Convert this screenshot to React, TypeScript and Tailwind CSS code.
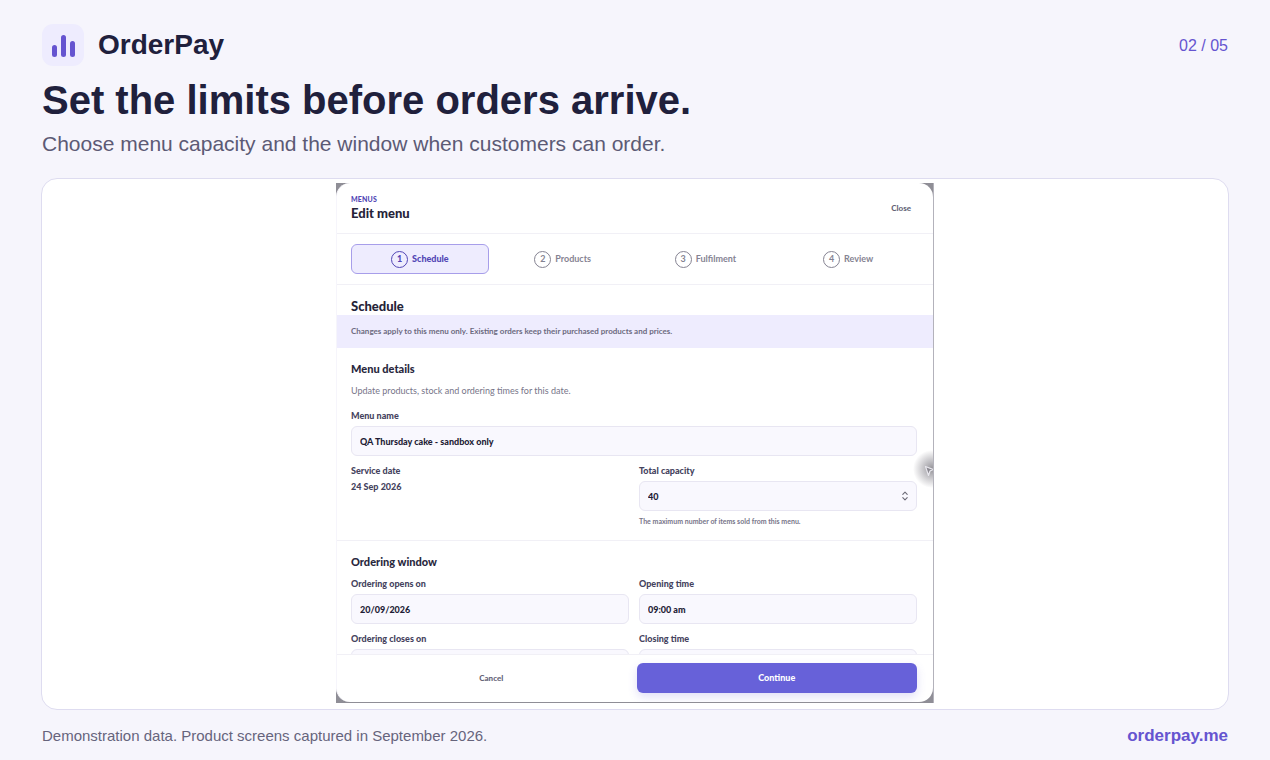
import type { ReactNode } from 'react';

interface FieldProps {
  id: string;
  label: string;
  value: string;
  stepper?: boolean;
  hint?: string;
}

const steps = ['Schedule', 'Products', 'Fulfilment', 'Review'];

function Field({ id, label, value, stepper = false, hint }: FieldProps) {
  return (
    <div className="flex flex-col gap-1">
      <label htmlFor={id} className="text-[9px] leading-3 font-black text-[#45435e]">
        {label}
      </label>
      <div className="relative">
        <input
          id={id}
          type="text"
          defaultValue={value}
          className="block h-[30px] w-full rounded-md border border-[#e8e6f2] bg-[#f9f8fe] px-2 text-[9px] font-black text-[#1f1d36] outline-none"
        />
        {stepper && (
          <svg
            viewBox="0 0 8 12"
            className="absolute top-[9px] right-2 h-3 w-2"
            fill="none"
            stroke="#6b6a76"
            strokeWidth="1.1"
            strokeLinecap="round"
            strokeLinejoin="round"
          >
            <path d="M1.8 4.3 4 2.1 6.2 4.3M1.8 7.7 4 9.9 6.2 7.7" />
          </svg>
        )}
      </div>
      {hint && <p className="text-[7px] leading-3 font-bold text-[#777589]">{hint}</p>}
    </div>
  );
}

function Section({ title, children }: { title: string; children: ReactNode }) {
  return (
    <section className="border-b border-[#f1f0f6] py-[13px] pr-4 pl-[14px]">
      <h3 className="mb-2 text-[11px] leading-4 font-black text-[#29273d]">{title}</h3>
      {children}
    </section>
  );
}

function EditMenuDialog() {
  return (
    <div className="relative flex w-full max-w-[598px] border-r border-[#b3b2bb] bg-[#8f8e96] pb-px font-[Lato,sans-serif]">
      <div className="flex min-h-0 w-full flex-col overflow-hidden rounded-[14px] border-l border-[#f6f5fb] bg-white">
        <header className="flex shrink-0 items-center justify-between border-b border-[#f1f0f6] pt-[11px] pr-[22px] pb-[11px] pl-[14px]">
          <div>
            <p className="text-[7px] leading-[10px] font-black tracking-wide text-[#5246b5]">MENUS</p>
            <h2 className="text-[13px] leading-[18px] font-black text-[#252338]">Edit menu</h2>
          </div>
          <button type="button" className="text-[8px] leading-3 font-black text-[#656377]">
            Close
          </button>
        </header>

        <nav className="grid shrink-0 grid-cols-4 gap-[5px] border-b border-[#f1f0f6] py-[10px] pr-4 pl-[14px]">
          {steps.map((step, idx) => {
            const active = idx === 0;
            return (
              <button
                key={step}
                type="button"
                className={`flex h-[30px] items-center justify-center gap-1 rounded-md border text-[9px] ${
                  active
                    ? 'border-[#a79eea] bg-[#eeecfe] font-black text-[#5246b5]'
                    : 'border-transparent font-bold text-[#858392]'
                }`}
              >
                <span className="flex size-[17px] items-center justify-center rounded-full border border-current">
                  {idx + 1}
                </span>
                {step}
              </button>
            );
          })}
        </nav>

        <div className="min-h-0 flex-1 overflow-hidden">
          <h2 className="pt-3 pr-4 pl-[14px] text-[13px] leading-[18px] font-black text-[#252338]">Schedule</h2>
          <p className="bg-[#eeecfe] py-[10px] pr-4 pl-[14px] text-[8px] leading-[13px] font-bold text-[#6c6a80]">
            Changes apply to this menu only. Existing orders keep their purchased products and prices.
          </p>

          <Section title="Menu details">
            <p className="mb-[13px] text-[9px] leading-3 text-[#777589]">
              Update products, stock and ordering times for this date.
            </p>
            <Field id="menu-name" label="Menu name" value="QA Thursday cake - sandbox only" />
            <div className="mt-[9px] grid grid-cols-2 gap-[10px]">
              <div className="flex flex-col gap-1 text-[9px] leading-3 font-black text-[#45435e]">
                <p>Service date</p>
                <p>24 Sep 2026</p>
              </div>
              <Field
                id="capacity"
                label="Total capacity"
                value="40"
                stepper
                hint="The maximum number of items sold from this menu."
              />
            </div>
          </Section>

          <Section title="Ordering window">
            <div className="grid grid-cols-2 gap-x-[10px] gap-y-[9px]">
              <Field id="opens-on" label="Ordering opens on" value="20/09/2026" />
              <Field id="opens-at" label="Opening time" value="09:00 am" />
              <Field id="closes-on" label="Ordering closes on" value="" />
              <Field id="closes-at" label="Closing time" value="" />
            </div>
          </Section>
        </div>

        <footer className="grid shrink-0 grid-cols-2 gap-[5px] border-t border-[#f1f0f6] pt-2 pr-4 pb-[9px] pl-[14px]">
          <button type="button" className="h-[30px] text-[8px] font-black text-[#656377]">
            Cancel
          </button>
          <button
            type="button"
            className="h-[30px] rounded-md bg-[#6761d9] text-[9px] font-black text-white shadow-[0_4px_10px_rgba(103,97,217,0.2)]"
          >
            Continue
          </button>
        </footer>
      </div>

      {/* Pointer resting on the dialog edge */}
      <div className="absolute inset-y-0 right-0 w-6 overflow-hidden">
        <svg viewBox="0 0 24 48" className="absolute top-[264px] right-0 h-12 w-6">
          <defs>
            <radialGradient id="pointer-shade">
              <stop offset="0" stopColor="#77757c" stopOpacity="0.8" />
              <stop offset="0.5" stopColor="#8a8890" stopOpacity="0.45" />
              <stop offset="1" stopColor="#8a8890" stopOpacity="0" />
            </radialGradient>
          </defs>
          <circle cx="23" cy="22" r="19" fill="url(#pointer-shade)" />
          <path
            d="M16.5 19.5 24 22.5 21 24 19.5 28.5Z"
            fill="#8a8890"
            stroke="#e9e8ee"
            strokeWidth="1.2"
            strokeLinejoin="round"
          />
        </svg>
      </div>
    </div>
  );
}

export default function App() {
  return (
    <main className="flex h-screen flex-col bg-[#f6f5fc] px-[41px] pt-6 pb-[13px] font-['Liberation_Sans',Arial,sans-serif] text-[#20203c]">
      <header className="flex items-center justify-between px-px">
        <div className="flex items-center gap-[14px]">
          <svg viewBox="0 0 42 42" className="size-[42px]">
            <rect width="42" height="42" rx="11" fill="#eeecfe" />
            <g fill="#6554d0">
              <rect x="10" y="21" width="5" height="12" rx="2.5" />
              <rect x="19" y="11" width="5" height="22" rx="2.5" />
              <rect x="28" y="17" width="5" height="16" rx="2.5" />
            </g>
          </svg>
          <span className="text-[28px] leading-[42px] font-bold">OrderPay</span>
        </div>
        <span className="pt-0.5 text-[16px] text-[#6554d0]">02 / 05</span>
      </header>

      <h1 className="mt-[10px] px-px text-[40px] leading-[48px] font-bold">Set the limits before orders arrive.</h1>
      <p className="mt-[7px] px-px text-[21px] leading-[26px] text-[#5c5a75]">
        Choose menu capacity and the window when customers can order.
      </p>

      <div className="mt-[21px] flex min-h-0 flex-1 justify-center rounded-2xl border border-[#dedcf0] bg-white px-1 pt-1 pb-[6px]">
        <EditMenuDialog />
      </div>

      <footer className="mt-[15px] flex items-center justify-between px-px">
        <p className="text-[15px] leading-[22px] text-[#66647c]">
          Demonstration data. Product screens captured in September 2026.
        </p>
        <a href="#" className="text-[17px] leading-[22px] font-bold text-[#6554d0]">
          orderpay.me
        </a>
      </footer>
    </main>
  );
}
